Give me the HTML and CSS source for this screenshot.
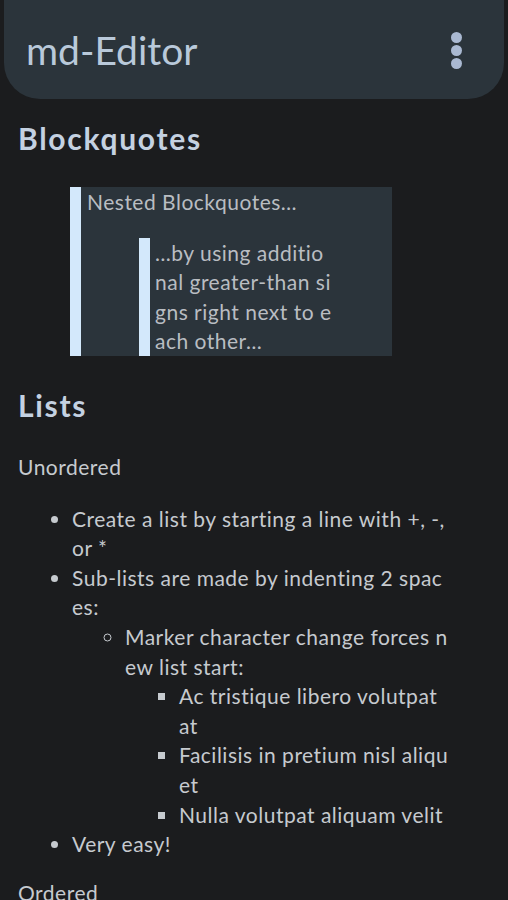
FILE: index.html
```html
<!DOCTYPE html>
<html>
<head>
<meta charset="utf-8">
<link rel="stylesheet" href="styles.css">
</head>
<body>
<header class="appbar">
  <div class="title">md-Editor</div>
  <div class="kebab"><span></span><span></span><span></span></div>
</header>
<main class="content">
  <h2 class="h-block">Blockquotes</h2>
  <blockquote class="bq">
    <p>Nested Blockquotes…</p>
    <blockquote class="bq inner">
      <p>…by using additio<br>nal greater-than si<br>gns right next to e<br>ach other…</p>
    </blockquote>
  </blockquote>
  <h2 class="h-lists">Lists</h2>
  <p class="para">Unordered</p>
  <ul class="l1">
    <li>Create a list by starting a line with +, -,<br>or *</li>
    <li>Sub-lists are made by indenting 2 spac<br>es:
      <ul class="l2">
        <li>Marker character change forces n<br>ew list start:
          <ul class="l3">
            <li>Ac tristique libero volutpat<br>at</li>
            <li>Facilisis in pretium nisl aliqu<br>et</li>
            <li>Nulla volutpat aliquam velit</li>
          </ul>
        </li>
      </ul>
    </li>
    <li>Very easy!</li>
  </ul>
  <p class="para para-after">Ordered</p>
</main>
</body>
</html>
```
FILE: styles.css
```css
html, body {
  margin: 0;
  padding: 0;
  background: #1b1c1e;
  height: 900px;
  overflow: hidden;
}
body {
  font-family: Lato, "Open Sans", sans-serif;
  color: #c6cacf;
  font-size: 21px;
  letter-spacing: 0.5px;
  line-height: 29.6px;
}
.appbar {
  margin: 0 4px;
  height: 99px;
  background: #2b343b;
  border-radius: 0 0 36px 36px;
  display: flex;
  align-items: center;
  justify-content: space-between;
  padding: 0 42px 0 22px;
  box-sizing: border-box;
}
.title {
  font-size: 39px;
  color: #b9c9da;
  letter-spacing: 0;
  margin-top: 2px;
}
.kebab {
  display: flex;
  flex-direction: column;
  gap: 2px;
  margin-top: 2px;
}
.kebab span {
  width: 11px;
  height: 11px;
  border-radius: 50%;
  background: #aab9d2;
}
.content {
  padding: 0 30px 0 18px;
  white-space: nowrap;
}
h2 {
  font-size: 30px;
  line-height: 36px;
  font-weight: 700;
  letter-spacing: 1.7px;
  color: #c4d1e1;
  margin: 0;
}
.h-block { margin-top: 21px; }
.bq {
  margin: 31px 86px 0 52px;
  background: #2b343b;
  border-left: 11px solid #d3e8fb;
  padding-left: 6px;
  color: #b9bdc2;
}
.bq p { margin: 0; }
.bq.inner {
  margin: 21px 52px 0 52px;
  padding-left: 5px;
  background: transparent;
}
.h-lists { margin-top: 31px; }
.para { margin: 29px 0 0 0; }
.para-after { margin-top: 19px; }
ul { margin: 0; padding-left: 54px; }
.l1 { margin-top: 22px; list-style: disc; }
.l2 { list-style: circle; padding-left: 53px; }
.l3 { list-style: square; }
```
